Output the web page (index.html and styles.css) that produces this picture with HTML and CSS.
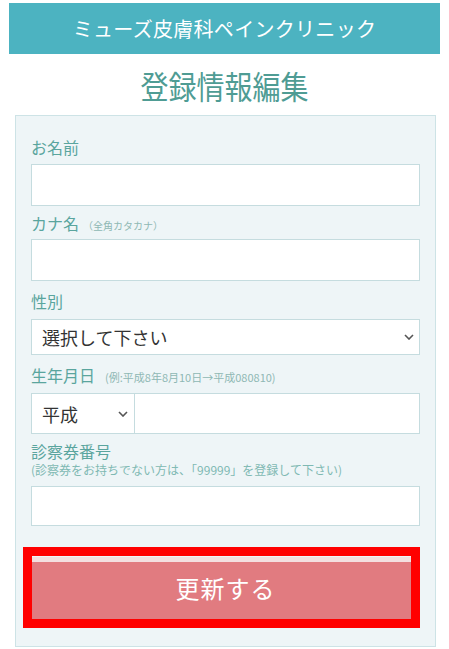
FILE: index.html
```html
<!DOCTYPE html>
<html lang="ja">
<head>
  <meta charset="UTF-8">
  <title>登録情報編集 — ミューズ皮膚科ペインクリニック</title>
  <link rel="stylesheet" href="styles.css">
</head>
<body>

<div class="page">
  <header class="site-header">ミューズ皮膚科ペインクリニック</header>

  <h1 class="page-title">登録情報編集</h1>

  <!-- ========= FORM ========= -->
  <form class="panel">
    <div class="field field-name">
      <label class="label">お名前</label>
      <input class="input" type="text">
    </div>

    <div class="field field-kana">
      <label class="label">カナ名<small class="note">（全角カタカナ）</small></label>
      <input class="input" type="text">
    </div>

    <div class="field field-sex">
      <label class="label">性別</label>
      <div class="select-wrap">
        <select class="select">
          <option>選択して下さい</option>
          <option>男性</option>
          <option>女性</option>
        </select>
        <svg class="chev" width="10" height="6" viewBox="0 0 10 6"><path d="M1 1l4 4 4-4" fill="none" stroke="#555" stroke-width="1.6"/></svg>
      </div>
    </div>

    <div class="field field-birth">
      <label class="label">生年月日<small class="note note-birth">(例:平成8年8月10日→平成080810)</small></label>
      <div class="birth-row">
        <div class="select-wrap era">
          <select class="select">
            <option>平成</option>
            <option>昭和</option>
          </select>
          <svg class="chev" width="10" height="6" viewBox="0 0 10 6"><path d="M1 1l4 4 4-4" fill="none" stroke="#555" stroke-width="1.6"/></svg>
        </div>
        <input class="input birth-input" type="text">
      </div>
    </div>

    <div class="field field-card">
      <label class="label">診察券番号</label>
      <p class="sub">(診察券をお持ちでない方は、「99999」を登録して下さい)</p>
      <input class="input" type="text">
    </div>

    <div class="submit">
      <button class="btn" type="button">更新する</button>
      <span class="highlight"></span>
    </div>
  </form>
</div>

</body>
</html>
```

FILE: styles.css
```css
/* ---------- base ---------- */
html, body {
  margin: 0;
  padding: 0;
  background: #ffffff;
  font-family: "Noto Sans CJK JP", "Noto Sans", sans-serif;
  color: #333;
}

.page { width: 449px; }

/* header bar */
.site-header {
  margin: 3px 9px 0;
  height: 51px;
  background: #4cb3c1;
  color: #ffffff;
  font-size: 20px;
  line-height: 51px;
  text-align: center;
  letter-spacing: 0.3px;
}

.page-title {
  margin: 9px 0 0;
  height: 52px;
  font-size: 28px;
  line-height: 46px;
  font-weight: normal;
  text-align: center;
  color: #4f9c94;
  transform: scaleY(1.12);
}

/* form panel */
.panel {
  margin: 0 13px 3px 15px;
  padding: 21px 15px 18px;
  background: #eef5f7;
  border: 1px solid #cde3e6;
}

.field-kana { margin-top: 7px; }
.field-sex { margin-top: 10px; }
.field-birth { margin-top: 10px; }
.field-card { margin-top: 7px; }

.label {
  display: block;
  font-size: 16px;
  line-height: 20px;
  color: #5aa59e;
  margin-bottom: 6px;
}
.field-name .label { margin-bottom: 7px; }
.field-sex .label,
.field-birth .label { margin-bottom: 8px; }
.field-card .label { margin-bottom: 2px; }
.note { font-size: 10px; line-height: 0; color: #8fb8b4; margin-left: 4px; }
.note-birth { font-size: 11px; margin-left: 10px; }

.sub {
  margin: 0 0 9px;
  font-size: 12px;
  line-height: 14px;
  color: #7fb9b3;
  white-space: nowrap;
}

.input {
  display: block;
  box-sizing: border-box;
  width: 100%;
  height: 42px;
  margin: 0;
  border: 1px solid #c5dcdf;
  background: #fff;
  font: inherit;
}
.field-card .input { height: 40px; }

/* selects */
.select-wrap { position: relative; }
.select {
  display: block;
  box-sizing: border-box;
  width: 100%;
  height: 36px;
  margin: 0;
  padding: 0 10px;
  border: 1px solid #c5dcdf;
  background: #fff;
  font-family: inherit;
  font-size: 18px;
  color: #333;
  appearance: none;
  -webkit-appearance: none;
  border-radius: 0;
}
.chev { position: absolute; right: 6px; top: 15px; }

.birth-row { display: flex; }
.era { width: 103px; flex-shrink: 0; }
.era .select { height: 41px; border-right: none; }
.era .chev { right: 6px; top: 18px; }
.birth-input { height: 41px; flex: 1; }

/* submit */
.submit {
  position: relative;
  margin-top: 31px;
}
.btn {
  display: block;
  box-sizing: border-box;
  width: 100%;
  height: 71px;
  padding: 0 0 16px;
  border: none;
  border-top: 5px solid #f3dfe0;
  background: #e17b80;
  color: #fff;
  font-family: inherit;
  font-size: 24px;
  letter-spacing: 1px;
}
.highlight {
  position: absolute;
  left: -8px;
  top: -10px;
  right: 0;
  bottom: 0;
  border: 9px solid #ff0000;
  pointer-events: none;
}
```
